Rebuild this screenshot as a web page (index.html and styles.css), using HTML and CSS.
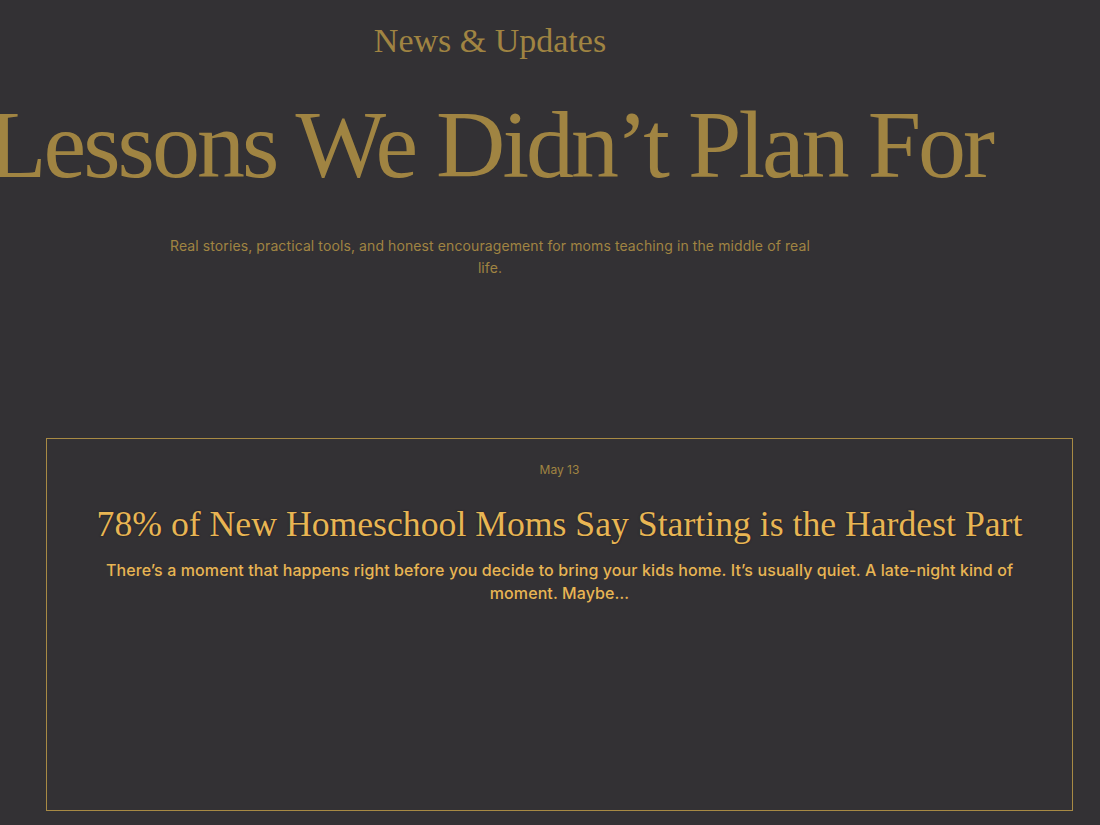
FILE: index.html
```html
<!DOCTYPE html>
<html lang="en">
<head>
<meta charset="utf-8">
<title>News &amp; Updates</title>
<link rel="stylesheet" href="styles.css">
</head>
<body>
<header class="hero">
  <p class="eyebrow">News &amp; Updates</p>
  <h1 class="headline">Lessons We Didn’t Plan For</h1>
  <p class="lede">Real stories, practical tools, and honest encouragement for moms teaching in the middle of real life.</p>
</header>
<main class="posts">
  <article class="card">
    <p class="date">May 13</p>
    <h2 class="card-title">78% of New Homeschool Moms Say Starting is the Hardest Part</h2>
    <p class="excerpt">There’s a moment that happens right before you decide to bring your kids home. It’s usually quiet. A late-night kind of moment. Maybe…</p>
  </article>
</main>
</body>
</html>
```
FILE: styles.css
```css
html, body {
  margin: 0;
  padding: 0;
  background: #333134;
}
body {
  width: 1100px;
  height: 825px;
  overflow: hidden;
  font-family: "Inter", "Lato", sans-serif;
}
.hero {
  width: 980px;
  display: flex;
  flex-direction: column;
  align-items: center;
  text-align: center;
}
.eyebrow {
  margin: 21px 0 0;
  font-family: "Liberation Serif", serif;
  font-size: 34px;
  line-height: 40px;
  color: #a08442;
}
.headline {
  margin: 29px 0 0;
  white-space: nowrap;
  font-family: "Liberation Serif", serif;
  font-weight: 400;
  font-size: 96px;
  line-height: 110px;
  letter-spacing: -3px;
  color: #a08442;
}
.lede {
  margin: 35px 0 0;
  max-width: 650px;
  font-size: 14px;
  line-height: 22px;
  letter-spacing: 0.1px;
  color: #a08442;
}
.posts {
  padding: 159px 27px 0 46px;
}
.card {
  border: 1px solid #a88a44;
  height: 373px;
  box-sizing: border-box;
  display: flex;
  flex-direction: column;
  align-items: center;
  text-align: center;
  padding: 23px 20px 0;
}
.date {
  margin: 0;
  font-size: 12px;
  line-height: 16px;
  color: #a08442;
}
.card-title {
  margin: 24px 0 0;
  white-space: nowrap;
  font-family: "Liberation Serif", serif;
  font-weight: 400;
  font-size: 35.7px;
  line-height: 44px;
  color: #e8b553;
  text-shadow: 0 0 2px #1d1c22;
}
.excerpt {
  margin: 13px 0 0;
  max-width: 930px;
  font-size: 16px;
  line-height: 23px;
  letter-spacing: 0.1px;
  font-weight: 500;
  color: #e8b553;
}
```
